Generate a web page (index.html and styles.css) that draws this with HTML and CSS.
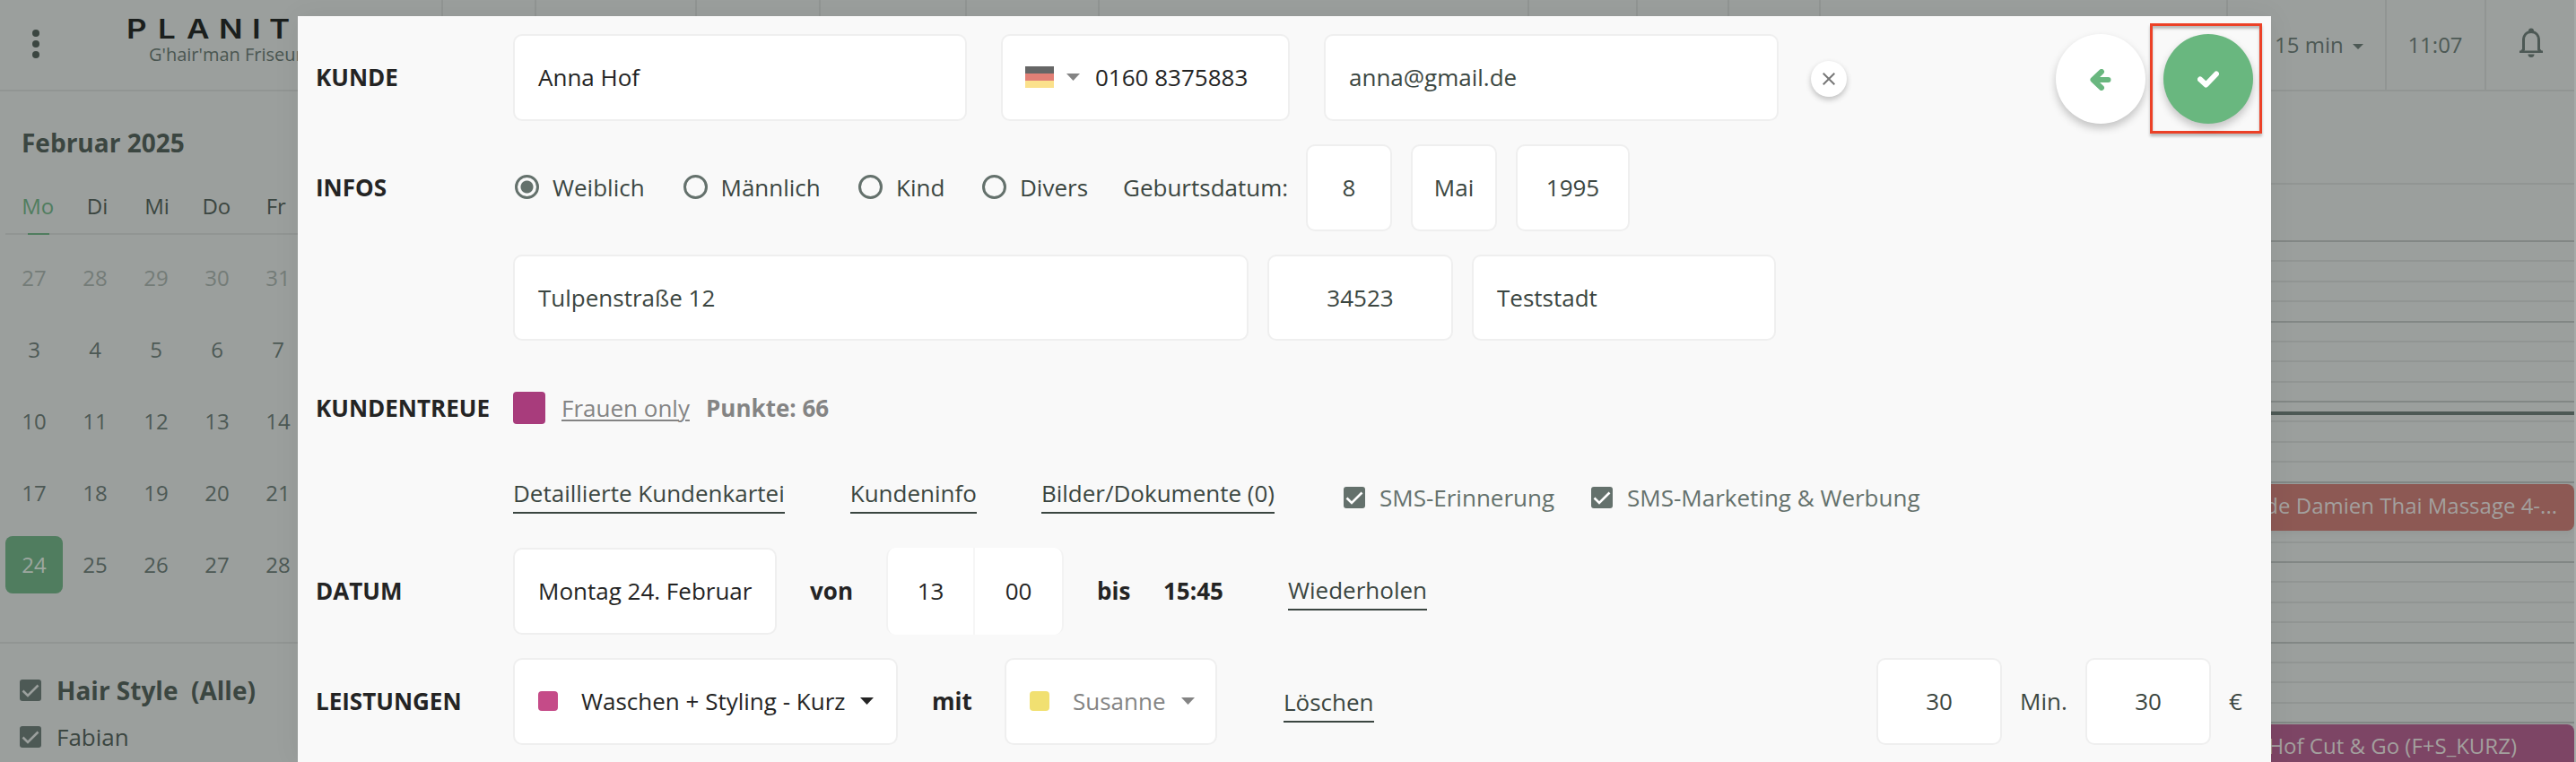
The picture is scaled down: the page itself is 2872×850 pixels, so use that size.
FILE: index.html
```html
<!DOCTYPE html>
<html lang="de">
<head>
<meta charset="utf-8">
<title>Termin</title>
<link rel="stylesheet" href="styles.css">
</head>
<body>
<div class="app">
  <header class="topbar">
    <div class="brand">
      <div class="dots"><i></i><i></i><i></i></div>
      <div class="brand-text">
        <div class="logo"><span>P</span><span>L</span><span>A</span><span>N</span><span>I</span><span>T</span></div>
        <div class="salon">G'hair'man Friseur</div>
      </div>
    </div>
    <div class="cell c1"></div><div class="cell c2"></div><div class="cell c3"></div><div class="cell c4"></div><div class="cell c5"></div>
    <div class="cell c6"></div><div class="cell c7"></div><div class="cell c8"></div><div class="cell c9"></div><div class="cell c10"></div>
    <div class="cell interval">15 min<svg class="mini-caret" viewBox="0 0 12 6"><path d="M0 0h12L6 6z"/></svg></div>
    <div class="cell clock">11:07</div>
    <div class="cell bell">
      <svg viewBox="0 0 28 34"><path class="bell-fill" d="M14 0.500a3 3 0 0 1 3 3v1.500h-6v-1.500a3 3 0 0 1 3-3zM1 25.500h26v2.500H1zM10.500 29.500h7a3.500 3.500 0 0 1-7 0z"/><path class="bell-line" d="M3.500 26.500L5.500 24.300V14c0-6 3.700-9.500 8.500-9.500s8.500 3.500 8.500 9.500v10.300l2 2.200"/></svg>
    </div>
  </header>

  <div class="body">
    <aside class="sidebar">
      <h2 class="month">Februar 2025</h2>
      <div class="weekdays"><span class="today">Mo</span><span>Di</span><span>Mi</span><span>Do</span><span>Fr</span></div>
      <div class="days">
        <span class="out">27</span><span class="out">28</span><span class="out">29</span><span class="out">30</span><span class="out">31</span>
        <span>3</span><span>4</span><span>5</span><span>6</span><span>7</span>
        <span>10</span><span>11</span><span>12</span><span>13</span><span>14</span>
        <span>17</span><span>18</span><span>19</span><span>20</span><span>21</span>
        <span class="selected">24</span><span>25</span><span>26</span><span>27</span><span>28</span>
      </div>
      <div class="staff">
        <div class="staff-row staff-group"><svg class="check" viewBox="0 0 24 24"><rect width="24" height="24" rx="3"/><path d="M3.500 12.500l5.500 5.500L20.500 6.500"/></svg>Hair Style&nbsp; (Alle)</div>
        <div class="staff-row"><svg class="check" viewBox="0 0 24 24"><rect width="24" height="24" rx="3"/><path d="M3.500 12.500l5.500 5.500L20.500 6.500"/></svg>Fabian</div>
      </div>
    </aside>
    <main class="schedule">
      <div class="all-day"></div>
      <div class="slots">
        <i></i><i></i><i></i><i></i><i></i><i></i><i></i><i></i><i></i><i></i><i></i><i></i><i></i>
        <i></i><i></i><i></i><i></i><i></i><i></i><i></i><i></i><i></i><i></i><i></i><i></i><i></i>
      </div>
      <div class="now"></div>
      <div class="event massage">de Damien Thai Massage 4-...</div>
      <div class="event cut">Hof Cut &amp; Go (F+S_KURZ)</div>
    </main>
  </div>
</div>

<section class="modal">
  <div class="row">
    <div class="label">KUNDE</div>
    <div class="field name dark">Anna Hof</div>
    <div class="field phone dark"><span class="flag"><i></i><i></i><i></i></span><svg class="caret muted" viewBox="0 0 15 8"><path d="M0 0h15L7.500 8z"/></svg>0160 8375883</div>
    <div class="field email">anna@gmail.de</div>
    <button class="clear"><svg viewBox="0 0 14 14"><path d="M0.700 0.700l12.600 12.600M13.300 0.700L0.700 13.300"/></svg></button>
    <div class="actions">
      <button class="round back"><svg viewBox="0 0 24 24"><path d="M13 3L3.500 12L13 21M4 12h16.500"/></svg></button>
      <div class="highlight"><button class="round save"><svg viewBox="0 0 24 24"><path d="M3 12.500l6.500 6L21 6.500"/></svg></button></div>
    </div>
  </div>

  <div class="row">
    <div class="label">INFOS</div>
    <div class="option o1"><span class="radio on"></span>Weiblich</div>
    <div class="option o2"><span class="radio"></span>Männlich</div>
    <div class="option o3"><span class="radio"></span>Kind</div>
    <div class="option o4"><span class="radio"></span>Divers</div>
    <div class="birth">Geburtsdatum:</div>
    <div class="field center day">8</div>
    <div class="field center day">Mai</div>
    <div class="field center year">1995</div>
  </div>

  <div class="row">
    <div class="label"></div>
    <div class="field street">Tulpenstraße 12</div>
    <div class="field center zip">34523</div>
    <div class="field city">Teststadt</div>
  </div>

  <div class="row">
    <div class="label">KUNDENTREUE</div>
    <div class="loyalty-color"></div>
    <div class="loyalty-name">Frauen only</div>
    <div class="points">Punkte: 66</div>
  </div>

  <div class="row links">
    <div class="label"></div>
    <a class="link l1">Detaillierte Kundenkartei</a>
    <a class="link l2">Kundeninfo</a>
    <a class="link l3">Bilder/Dokumente (0)</a>
    <div class="sms s1"><svg class="check" viewBox="0 0 24 24"><rect width="24" height="24" rx="3"/><path d="M3.500 12.500l5.500 5.500L20.500 6.500"/></svg><span>SMS-Erinnerung</span></div>
    <div class="sms s2"><svg class="check" viewBox="0 0 24 24"><rect width="24" height="24" rx="3"/><path d="M3.500 12.500l5.500 5.500L20.500 6.500"/></svg><span>SMS-Marketing &amp; Werbung</span></div>
  </div>

  <div class="row">
    <div class="label">DATUM</div>
    <div class="field date dark">Montag 24. Februar</div>
    <div class="word von">von</div>
    <div class="time dark"><span>13</span><span>00</span></div>
    <div class="word bis">bis</div>
    <div class="word end">15:45</div>
    <a class="link repeat">Wiederholen</a>
  </div>

  <div class="row">
    <div class="label">LEISTUNGEN</div>
    <div class="field service dark"><span class="swatch pink"></span>Waschen + Styling - Kurz<svg class="caret" viewBox="0 0 15 8"><path d="M0 0h15L7.500 8z"/></svg></div>
    <div class="word mit">mit</div>
    <div class="field employee"><span class="swatch yellow"></span>Susanne<svg class="caret muted" viewBox="0 0 15 8"><path d="M0 0h15L7.500 8z"/></svg></div>
    <a class="link delete">Löschen</a>
    <div class="price">
      <div class="field center amount">30</div>
      <span class="unit-min">Min.</span>
      <div class="field center amount">30</div>
      <span class="unit-eur">€</span>
    </div>
  </div>
</section>
</body>
</html>
```
FILE: styles.css
```css
* { box-sizing: border-box; }

html { height: 850px; overflow: hidden; }

body {
  margin: 0;
  width: 2872px;
  height: 850px;
  overflow: hidden;
  position: relative;
  background: #9b9f9d;
  color: #3b4641;
  font: 26px/36px "Open Sans", "Noto Sans", sans-serif;
}

.app { display: flex; flex-direction: column; height: 850px; overflow: hidden; border-right: 2px solid #a6aaa8; }

/* Top bar */
.topbar { display: flex; height: 102px; flex: none; border-bottom: 2px solid #919593; }
.brand { width: 492px; display: flex; }
.dots { width: 144px; padding: 33px 0 0 36px; display: flex; flex-direction: column; gap: 4px; }
.dots i { width: 8px; height: 8px; border-radius: 50%; background: #3b4641; }
.logo { display: flex; height: 37px; margin-top: 13px; margin-left: -3px; font: 600 30.500px/37px Inter, sans-serif; color: #1b1f1d; }
.logo span { width: 35px; transform: scaleX(1.15); transform-origin: left; }
.logo span:nth-child(2) { width: 32px; }
.logo span:nth-child(3) { width: 36px; }
.logo span:nth-child(4) { width: 37px; }
.logo span:nth-child(5) { width: 19px; }
.salon { margin: 0 0 0 22px; font-size: 20px; line-height: 22px; color: #4a5651; white-space: nowrap; }
.cell { border-left: 2px solid #919593; display: flex; align-items: center; color: #4d5955; font-size: 24px; font-weight: 500; white-space: nowrap; }
.c1 { width: 104px; } .c2 { width: 179px; } .c3 { width: 138px; } .c4 { width: 163px; } .c5 { width: 148px; }
.c6 { width: 479px; } .c7 { width: 121px; } .c8 { width: 102px; } .c9 { width: 102px; } .c10 { width: 454px; }
.interval { width: 177px; padding-left: 52px; }
.mini-caret { width: 12px; height: 6px; margin: 3px 0 0 10px; fill: #4d5955; }
.clock { width: 111px; justify-content: center; padding-right: 1px; }
.bell { width: 100px; padding-left: 36px; }
.bell svg { width: 28px; height: 34px; margin-top: -4px; }
.bell-fill { fill: #4d5955; }
.bell-line { fill: none; stroke: #4d5955; stroke-width: 3; }

.body { display: flex; flex: 1; min-height: 0; }

/* Sidebar */
.sidebar { width: 492px; }
.month { margin: 38px 0 0 24px; font-size: 28px; line-height: 38px; font-weight: 700; }
.weekdays { display: grid; grid-template-columns: repeat(5, 66.400px); margin: 36px 0 0 6px; height: 48px; padding-left: 3px; border-bottom: 2px solid #919593; font-size: 24px; font-weight: 500; line-height: 31px; text-align: center; }
.today { color: #507d5f; height: 48px; background: linear-gradient(#507d5f, #507d5f) 22px 46px / 24px 2px no-repeat; }
.days { display: grid; grid-template-columns: repeat(5, 64px); column-gap: 4px; row-gap: 16px; margin: 16px 0 0 6px; font-size: 24px; text-align: center; font-weight: 500; }
.days span { height: 64px; line-height: 64px; color: #4d5955; border-radius: 8px; }
.days .out { color: #747c78; }
.days .selected { background: #507d5f; color: #9da7a0; }
.staff { margin-top: 54px; border-top: 2px solid #919593; padding: 34px 0 0 22px; }
.staff-row { display: flex; align-items: center; gap: 17px; height: 36px; margin-top: 16px; }
.staff-group { font-size: 28px; font-weight: 700; margin: 0; }
.check { width: 24px; height: 24px; flex: none; fill: #4d5955; }
.check path { fill: none; stroke: #9b9f9d; stroke-width: 2.600; }

/* Schedule */
.schedule { flex: 1; position: relative; }
.all-day { height: 104px; border-bottom: 2px solid #919593; }
.slots { display: grid; grid-auto-rows: 22.375px; padding-top: 62px; }
.slots i { border-top: 2px solid #919593; }
.slots i:nth-child(4n+1) { border-color: #828785; }
.now { position: absolute; left: 0; right: -2px; top: 357px; height: 4px; background: #4d5955; }
.event { position: absolute; left: 0; right: 0; height: 52px; padding-top: 6px; border-radius: 8px; font-size: 24px; font-weight: 500; text-align: right; color: #a3a09e; }
.massage { top: 438px; background: #8d5954; padding-right: 19px; box-shadow: 0 3px 8px rgba(0, 0, 0, .05); }
.cut { top: 706px; background: #7d4565; padding-right: 64px; }

/* Appointment dialog */
.modal { position: absolute; left: 332px; top: 18px; width: 2200px; height: 832px; overflow: hidden; padding: 20px 0 0 20px; background: #f9f9f9; box-shadow: 0 0 30px rgba(0, 0, 0, .06); }
.row { display: flex; align-items: center; height: 96.750px; margin-bottom: 26px; white-space: nowrap; }
.label { width: 220px; font-weight: 700; color: #242424; flex: none; }
.field { height: 96.750px; border: 2px solid #efefef; border-radius: 10px; background: #fff; display: flex; align-items: center; padding-left: 26px; flex: none; }
.center { justify-content: center; padding: 0; }
.dark { color: #242424; }
.caret { width: 15px; height: 8px; fill: #242424; }
.caret.muted { fill: #848484; }

.name { width: 506px; }
.phone { width: 322px; margin-left: 38px; padding-left: 25px; }
.flag { width: 32px; height: 24px; display: grid; grid-template-rows: repeat(3, 8px); }
.flag i:nth-child(1) { background: #666; }
.flag i:nth-child(2) { background: #e28076; }
.flag i:nth-child(3) { background: #fbe18c; }
.phone .caret { margin: 0 17px 0 14px; }
.email { width: 507px; margin-left: 38px; }
button { border: 0; padding: 0; border-radius: 50%; background: #fff; display: flex; align-items: center; justify-content: center; }
.clear { width: 40px; height: 40px; margin: 3px 0 0 36px; box-shadow: 0 3px 6px rgba(0, 0, 0, .24); }
.clear svg { width: 14px; height: 14px; margin-top: 1px; stroke: #777; stroke-width: 2; fill: none; }
.actions { display: flex; align-items: center; margin-left: auto; padding: 3px 10px 0 0; gap: 5px; }
.round { width: 100px; height: 100px; box-shadow: 0 5px 10px rgba(0, 0, 0, .22); }
.round svg { width: 24px; height: 24px; fill: none; stroke-width: 6; stroke-linecap: round; stroke-linejoin: round; }
.back svg { stroke: #69b77f; margin-top: 2px; }
.save { background: #69b77f; }
.save svg { stroke: #fff; }
.highlight { width: 125px; height: 123px; border: 3px solid #ec4127; padding: 9px 0 0 12px; box-shadow: 0 3px 3px rgba(0, 0, 0, .25), inset 0 3px 3px rgba(0, 0, 0, .25); }

.option { display: flex; align-items: center; color: #3b4641; padding-left: 2px; }
.radio { width: 27px; height: 27px; border: 3px solid #64716c; border-radius: 50%; margin-right: 15px; margin-top: -1px; }
.on { background: radial-gradient(circle, #64716c 6.500px, transparent 7.500px); }
.o1 { width: 187.500px; } .o2 { width: 195.500px; } .o3 { width: 138px; } .o4 { width: 159px; }
.birth { width: 204px; }
.day { width: 96px; margin-right: 21px; }
.year { width: 127px; }

.street { width: 820px; }
.zip { width: 207px; margin: 0 21px; }
.city { width: 339px; }

.loyalty-color { width: 36px; height: 36px; border-radius: 4px; background: #a83c7c; }
.loyalty-name { margin-left: 18px; width: 161px; color: #848484; text-decoration: underline; text-decoration-thickness: 2px; text-underline-offset: 3px; }
.points { font-weight: 700; color: #848484; }

.links { height: 108px; margin: -26px 0 0; }
.link { border-bottom: 2px solid #3b4641; height: 41px; line-height: 36px; color: #3b4641; }
.links .link { margin-top: -9px; }
.l2 { margin-left: 73px; }
.l3 { margin-left: 72px; }
.sms { display: flex; align-items: center; gap: 16px; color: #64716c; margin-top: -4px; }
.sms .check { fill: #64716c; }
.sms .check path { stroke: #fff; }
.s1 { margin-left: 77px; }
.s2 { margin-left: 41px; }

.date { width: 294px; }
.word { font-weight: 700; color: #242424; }
.von { width: 122px; padding-left: 37px; }
.time { width: 198px; height: 96.750px; display: grid; grid-template-columns: 1fr 1fr; background: #fff; border: solid #f3f3f3; border-width: 0 2px; border-radius: 10px; text-align: center; line-height: 96px; }
.time span:first-child { border-right: 2px solid #f6f6f6; }
.bis { width: 111px; padding-left: 37px; }
.end { width: 139px; }
.repeat { margin-top: 2px; }

.service { width: 429px; }
.swatch { width: 22px; height: 22px; border-radius: 4px; margin-right: 26px; }
.pink { background: #c54b88; }
.yellow { background: #f1e071; }
.service .caret, .employee .caret { margin-left: 17px; }
.mit { width: 119px; padding-left: 38px; }
.employee { width: 237px; color: #848484; }
.delete { margin: 7px 0 0 74px; }
.price { display: flex; align-items: center; margin-left: auto; }
.amount { width: 140px; }
.unit-min { width: 93px; padding-left: 20px; }
.unit-eur { width: 67px; padding-left: 20px; }
```
